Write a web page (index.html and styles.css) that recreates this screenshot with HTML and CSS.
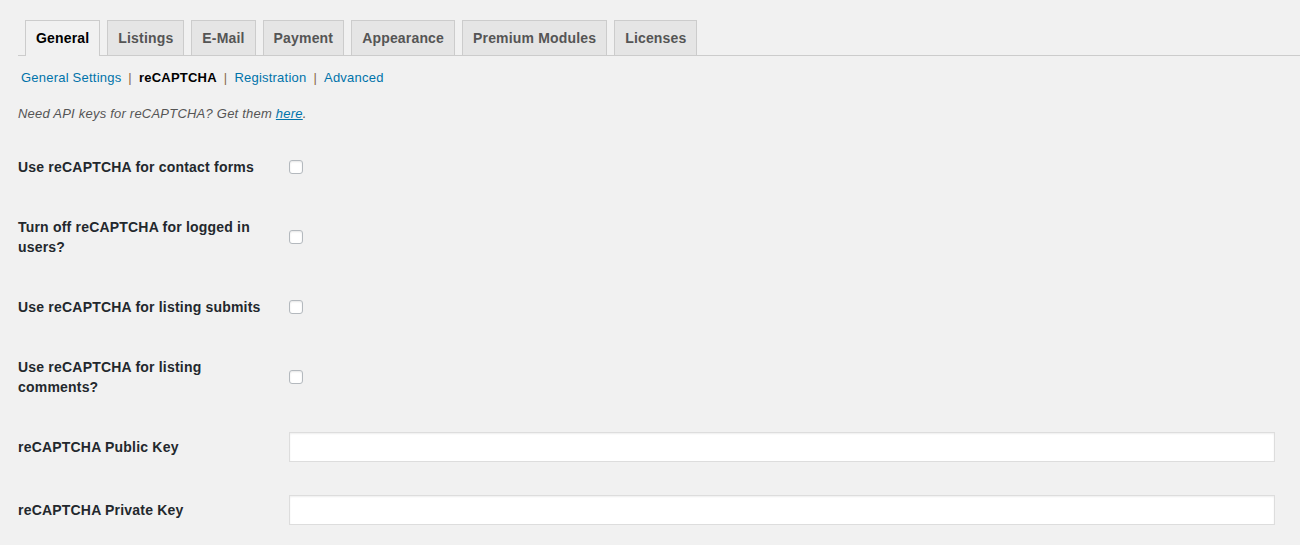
FILE: index.html
```html
<!DOCTYPE html>
<html lang="en">
<head>
    <meta charset="UTF-8">
    <title>Settings</title>
    <link rel="stylesheet" href="styles.css">
</head>
<body>
<div class="wrap">
    <h2 class="nav-tab-wrapper">
        <a class="nav-tab nav-tab-active" href="#">General</a>
        <a class="nav-tab" href="#">Listings</a>
        <a class="nav-tab" href="#">E-Mail</a>
        <a class="nav-tab" href="#">Payment</a>
        <a class="nav-tab" href="#">Appearance</a>
        <a class="nav-tab" href="#">Premium Modules</a>
        <a class="nav-tab" href="#">Licenses</a>
    </h2>
    <ul class="subsubsub">
        <li><a href="#">General Settings</a><span class="sep">|</span></li>
        <li><a class="current" href="#">reCAPTCHA</a><span class="sep">|</span></li>
        <li><a href="#">Registration</a><span class="sep">|</span></li>
        <li><a href="#">Advanced</a></li>
    </ul>
    <p class="description">Need API keys for reCAPTCHA? Get them <a href="#">here</a>.</p>
    <table class="form-table">
        <tr>
            <th>Use reCAPTCHA for contact forms</th>
            <td><input type="checkbox"></td>
        </tr>
        <tr>
            <th>Turn off reCAPTCHA for logged in users?</th>
            <td><input type="checkbox"></td>
        </tr>
        <tr>
            <th>Use reCAPTCHA for listing submits</th>
            <td><input type="checkbox"></td>
        </tr>
        <tr>
            <th>Use reCAPTCHA for listing comments?</th>
            <td><input type="checkbox"></td>
        </tr>
        <tr class="text-row">
            <th>reCAPTCHA Public Key</th>
            <td><input type="text" class="regular-text"></td>
        </tr>
        <tr class="text-row">
            <th>reCAPTCHA Private Key</th>
            <td><input type="text" class="regular-text"></td>
        </tr>
    </table>
</div>
</body>
</html>
```

FILE: styles.css
```css
*{ padding: 0; margin: 0; box-sizing: border-box;}
body{
    background: #f1f1f1;
    color: #444;
    font-family: "Liberation Sans", Arial, sans-serif;
    font-size: 13px;
    letter-spacing: 0.22px;
    overflow: hidden;
}
a{
    color: #0073aa;
    text-decoration: none;
}
.wrap{
    padding-left: 18px;
    padding-top: 20px;
}
.nav-tab-wrapper{
    display: flex;
    border-bottom: 1px solid #ccc;
    padding-left: 7px;
    font-size: 14px;
    font-weight: bold;
    letter-spacing: 0.17px;
}
.nav-tab{
    border: 1px solid #ccc;
    border-bottom: none;
    margin-right: 7px;
    padding: 5px 10px;
    line-height: 24px;
    background: #e5e5e5;
    color: #555;
}
.nav-tab-active{
    background: #f1f1f1;
    color: #000;
    margin-bottom: -1px;
    padding-bottom: 6px;
}
.subsubsub{
    display: flex;
    list-style: none;
    margin-top: 13px;
    padding-left: 3px;
    line-height: 18px;
}
.subsubsub .current{
    color: #000;
    font-weight: bold;
}
.sep{
    color: #8a6a4a;
    margin: 0 7px 0 7px;
}
.description{
    margin-top: 18px;
    font-style: italic;
    color: #555;
    line-height: 18px;
}
.description a{
    text-decoration: underline;
}
.form-table{
    width: 100%;
    border-collapse: collapse;
    margin-top: 14px;
    table-layout: fixed;
}
.form-table th{
    width: 260px;
    padding: 20px 10px 20px 0;
    text-align: left;
    vertical-align: top;
    font-size: 14px;
    font-weight: bold;
    line-height: 20px;
    letter-spacing: 0.2px;
    color: #23282d;
}
.form-table td{
    padding: 15px 25px 15px 11px;
    vertical-align: middle;
}
.form-table .text-row td{
    padding-top: 15px;
    padding-bottom: 18px;
}
.form-table input[type=checkbox]{
    -webkit-appearance: none;
    appearance: none;
    display: block;
    width: 14px;
    height: 14px;
    background: #fff;
    border: 1px solid #b4b9be;
    border-radius: 3px;
    box-shadow: inset 0 1px 2px rgba(0,0,0,.1);
}
.regular-text{
    display: block;
    width: 100%;
    height: 30px;
    background: #fff;
    border: 1px solid #ddd;
    box-shadow: inset 0 1px 2px rgba(0,0,0,.07);
    font-size: 14px;
}
```
